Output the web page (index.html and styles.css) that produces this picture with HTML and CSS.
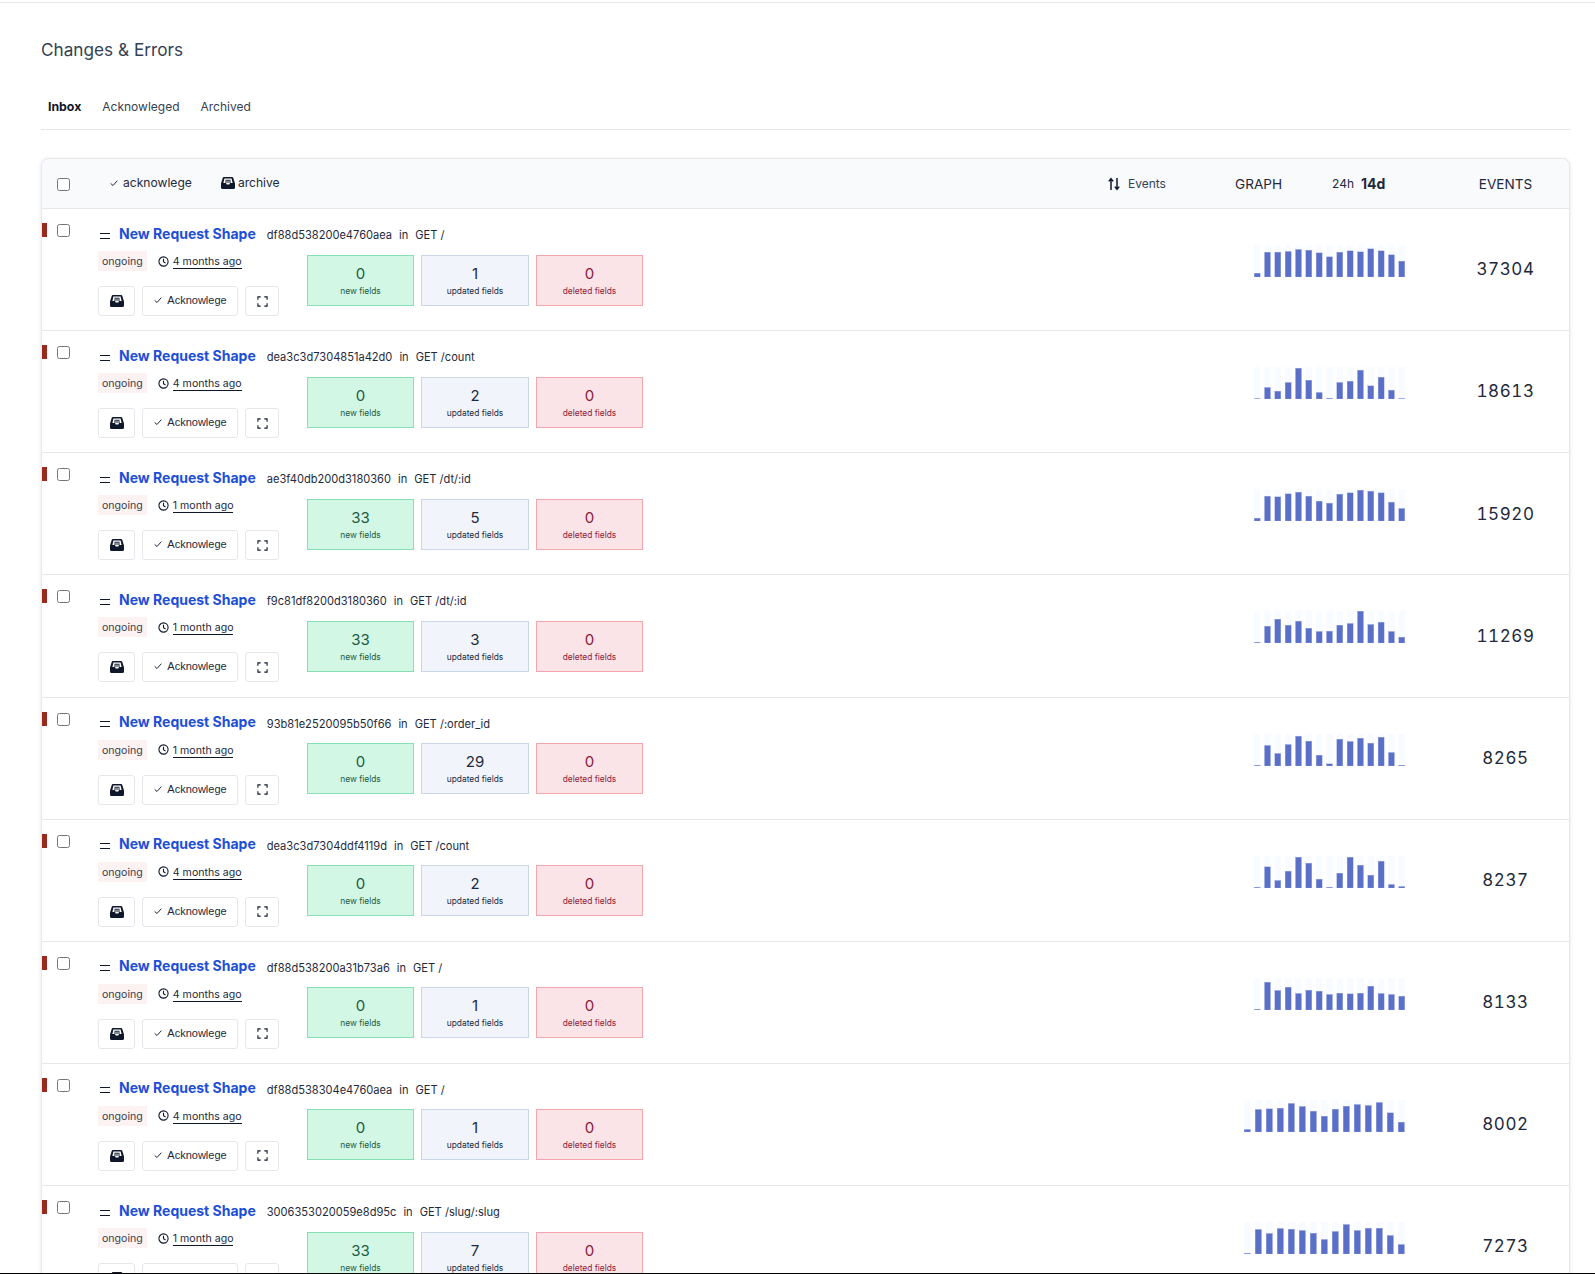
FILE: index.html
```html
<!DOCTYPE html>
<html lang="en">
<head>
  <meta charset="UTF-8" />
  <title>Changes &amp; Errors</title>
  <meta name="viewport" content="width=device-width, initial-scale=1.0" />
  <link rel="stylesheet" href="styles.css">
</head>
<body>

<div class="page">
  <div class="topline"></div>

  <main class="content">
    <h1 class="title">Changes &amp; Errors</h1>

    <nav class="tabs">
      <a href="#" class="tab active">Inbox</a>
      <a href="#" class="tab">Acknowleged</a>
      <a href="#" class="tab">Archived</a>
    </nav>

    <section class="card">
      <div class="card-head">
        <div class="col-check"><input type="checkbox"></div>
        <div class="head-actions">
          <span class="head-action">
            <svg class="icon-check" viewBox="0 0 12 12"><path d="M2 6.5 L4.8 9 L10 3.2" /></svg>
            acknowlege
          </span>
          <span class="head-action archive">
            <svg class="icon-inbox" viewBox="0 0 14 14"><use href="#inbox" /></svg>
            archive
          </span>
        </div>
        <div class="head-sort">
          <svg class="icon-sort" viewBox="0 0 12 14"><path d="M3 13 V2 M0.8 4.4 L3 1.6 L5.2 4.4 M9 1 V12 M6.8 9.6 L9 12.4 L11.2 9.6" /></svg>
          Events
        </div>
        <div class="head-graph">
          <span class="graph-label">GRAPH</span>
          <span class="range">24h</span>
          <span class="range range-on">14d</span>
        </div>
        <div class="col-events head-events">EVENTS</div>
      </div>

      <div id="rows"></div>
    </section>
  </main>
</div>

<svg class="defs" width="0" height="0">
  <symbol id="inbox" viewBox="0 0 14 14">
    <path fill="#0f172a" d="M3 1 H11 A1.4 1.4 0 0 1 12.3 2 L14 7.4 V11.5 A1.5 1.5 0 0 1 12.5 13 H1.5 A1.5 1.5 0 0 1 0 11.5 V7.4 L1.7 2 A1.4 1.4 0 0 1 3 1 Z" />
    <path fill="#fff" d="M3.4 2.6 H10.6 L11.6 7 H9 L8.3 8.6 H5.7 L5 7 H2.4 Z" />
    <path fill="#0f172a" d="M4.4 3.8 H9.6 V4.8 H4.4 Z M4 5.5 H10 V6.4 H4 Z" />
  </symbol>
</svg>

<script src="script.js"></script>
</body>
</html>
```

FILE: styles.css
```css
html, body {
  margin: 0;
  padding: 0;
  background: #fff;
}
body {
  font-family: Inter, 'Liberation Sans', sans-serif;
  color: #1e293b;
}
a {
  text-decoration: none;
  color: inherit;
}
.defs {
  position: absolute;
}
.page {
  height: 1274px;
  overflow: hidden;
  padding-top: 2px;
  box-sizing: border-box;
  border-bottom: 1px solid #000;
}
.topline {
  height: 1px;
  background: #e5e7eb;
}
.content {
  padding: 0 25px 0 41px;
}
.title {
  margin: 0;
  padding-top: 35px;
  font-size: 17.2px;
  line-height: 24px;
  font-weight: 400;
  color: #334155;
}
.tabs {
  display: flex;
  gap: 21px;
  margin-top: 36px;
  padding: 0 7px 13px;
  border-bottom: 1px solid #e5e7eb;
}
.tab {
  font-size: 12px;
  line-height: 18px;
  color: #374151;
}
.tab.active {
  font-size: 12.3px;
  font-weight: 700;
  color: #111827;
}
.card {
  margin-top: 28px;
  border: 1px solid #e5e7eb;
  border-left-color: #e4e9f7;
  border-bottom: none;
  border-radius: 8px 8px 0 0;
  box-shadow: 0 1px 4px rgba(30, 41, 90, 0.12);
}
.card-head {
  display: flex;
  align-items: center;
  height: 49px;
  background: #f9fafb;
  border-bottom: 1px solid #e5e7eb;
  border-radius: 8px 8px 0 0;
  font-size: 12.1px;
}
.col-check {
  width: 56px;
  padding-left: 15px;
  box-sizing: border-box;
  flex-shrink: 0;
}
.col-check input {
  display: block;
  margin: 0;
}
.card-head .col-check {
  padding-top: 2px;
}
.head-actions {
  flex: 1;
  display: flex;
  gap: 29px;
  padding-left: 11px;
  margin-top: -2px;
}
.head-action {
  display: flex;
  align-items: center;
  gap: 4px;
  color: #1e293b;
}
.head-action.archive {
  gap: 3px;
}
.icon-check {
  width: 10px;
  height: 10px;
  fill: none;
  stroke: #1e293b;
  stroke-width: 1.2;
}
.icon-inbox {
  width: 14px;
  height: 14px;
}
.head-sort {
  width: 127px;
  display: flex;
  align-items: center;
  gap: 8px;
  font-size: 12px;
  color: #334155;
}
.icon-sort {
  width: 12px;
  height: 14px;
  fill: none;
  stroke: #0f172a;
  stroke-width: 1.5;
}
.head-graph {
  width: 207px;
  display: flex;
  align-items: center;
}
.graph-label {
  font-size: 13.6px;
  width: 97px;
}
.range {
  font-size: 12px;
}
.range-on {
  font-size: 14px;
  font-weight: 700;
  margin-left: 7px;
}
.col-events {
  width: 127px;
  flex-shrink: 0;
  text-align: center;
}
.head-events {
  font-size: 13.6px;
}
.row {
  position: relative;
  display: flex;
  height: 122.125px;
  box-sizing: border-box;
  border-bottom: 1px solid #e5e7eb;
}
.marker {
  position: absolute;
  left: 0;
  top: 14px;
  width: 5px;
  height: 14px;
  background: #9a2a1e;
}
.row .col-check {
  padding-top: 15px;
}
.row-main {
  flex: 1;
  padding-top: 14px;
}
.row-title {
  display: flex;
  align-items: center;
  height: 24px;
  font-size: 11.1px;
  color: #1e293b;
}
.icon-eq {
  width: 10px;
  height: 4px;
  margin: 1px 9px 0 2px;
  border-top: 1.5px solid #0f172a;
  border-bottom: 1.5px solid #0f172a;
}
.shape-name {
  font-size: 14px;
  font-weight: 700;
  color: #1d4ed8;
  margin: 0 11px 4px 0;
}
.in {
  margin: 0 7px;
}
.row-body {
  display: flex;
  margin-top: 4px;
}
.row-meta {
  width: 209px;
  flex-shrink: 0;
}
.meta-top {
  display: flex;
  align-items: center;
  height: 20px;
  font-size: 10.6px;
}
.badge {
  background: #fdf2f2;
  padding: 0 4px;
  line-height: 22px;
  height: 20px;
  margin-right: 11px;
  color: #374151;
}
.age {
  display: flex;
  align-items: center;
  gap: 4px;
  padding-top: 2px;
}
.icon-clock {
  width: 11px;
  height: 11px;
  margin-top: -2px;
  fill: none;
  stroke: #0f172a;
  stroke-width: 1.2;
}
.age a {
  color: #1e293b;
  border-bottom: 1px solid #0f172a;
  line-height: 13px;
}
.buttons {
  display: flex;
  gap: 7px;
  margin-top: 15px;
}
.btn {
  display: flex;
  align-items: center;
  justify-content: center;
  gap: 4px;
  height: 30px;
  box-sizing: border-box;
  background: #fff;
  border: 1px solid #e5e7eb;
  border-radius: 3px;
  font-size: 11px;
  color: #1e293b;
}
.btn-archive {
  width: 37px;
}
.btn-ack {
  width: 96px;
  padding-bottom: 2.8px;
}
.btn-full {
  width: 34px;
}
.icon-full {
  width: 11px;
  height: 11px;
  fill: none;
  stroke: #0f172a;
  stroke-width: 1.2;
}
.metrics {
  display: flex;
  gap: 7px;
  margin-top: 3.6px;
}
.metric {
  width: 107px;
  height: 51px;
  box-sizing: border-box;
  border: 1px solid;
  text-align: center;
  padding-top: 9px;
}
.metric.updated {
  width: 108px;
}
.metric b {
  display: block;
  font-weight: 400;
  font-size: 15px;
  line-height: 18px;
}
.metric span {
  display: block;
  margin-top: 1px;
  font-size: 8.4px;
  line-height: 14px;
}
.metric.added {
  background: #d3f7e5;
  border-color: #86e0b4;
  color: #1c5a44;
}
.metric.updated {
  background: #f1f5fb;
  border-color: #cbd5e8;
  color: #1e293b;
}
.metric.deleted {
  background: #fbe4e7;
  border-color: #f5a5ae;
  color: #8b1a3b;
}
.graph {
  display: block;
  flex-shrink: 0;
  margin-top: 36px;
}
.track {
  fill: #f8fbff;
}
.bar {
  fill: #5a6fc8;
  stroke: #a3b0e6;
  stroke-width: 0.3;
}
.row .col-events {
  width: 164px;
  padding: 0 0 0.4px 37px;
  box-sizing: border-box;
  align-self: center;
  font-size: 17px;
  letter-spacing: 0.6px;
  font-variant-numeric: tabular-nums;
  color: #1e293b;
}
```

FILE: script.js
```js
const issues = [
  { hash: "df88d538200e4760aea", path: "GET /", age: "4 months ago", added: 0, updated: 1, events: 37304,
    bars: [4, 25, 25, 25.7, 27.7, 27, 24.3, 20.3, 25, 26.3, 25.3, 28.3, 26.3, 22.3, 16] },
  { hash: "dea3c3d7304851a42d0", path: "GET /count", age: "4 months ago", added: 0, updated: 2, events: 18613,
    bars: [0.7, 11.7, 8, 16.7, 31, 19, 6.7, 1, 16.7, 18, 29, 13.3, 22, 9, 0.7] },
  { hash: "ae3f40db200d3180360", path: "GET /dt/:id", age: "1 month ago", added: 33, updated: 5, events: 15920,
    bars: [3, 25, 24.3, 27.3, 29, 25, 20, 18, 27, 28.3, 31, 30, 28.3, 19, 12.7] },
  { hash: "f9c81df8200d3180360", path: "GET /dt/:id", age: "1 month ago", added: 33, updated: 3, events: 11269,
    bars: [1, 17, 24, 18, 22, 15, 11.7, 12, 18, 19.7, 32, 18.7, 21, 11.7, 6] },
  { hash: "93b81e2520095b50f66", path: "GET /:order_id", age: "1 month ago", added: 0, updated: 29, events: 8265,
    bars: [1, 20.7, 12.7, 21.7, 30, 25, 11, 2.3, 27, 24.7, 28, 23, 29, 13.7, 1] },
  { hash: "dea3c3d7304ddf4119d", path: "GET /count", age: "4 months ago", added: 0, updated: 2, events: 8237,
    bars: [1, 21.3, 7.7, 17, 31, 25, 9, 1, 15, 31, 23, 13, 27, 3.7, 1.7] },
  { hash: "df88d538200a31b73a6", path: "GET /", age: "4 months ago", added: 0, updated: 1, events: 8133,
    bars: [1, 28, 19.7, 23, 16.7, 20, 19, 15.7, 17, 16.3, 17, 24, 16.7, 15.7, 14] },
  { hash: "df88d538304e4760aea", path: "GET /", age: "4 months ago", added: 0, updated: 1, events: 8002, wide: true,
    bars: [2.7, 22.7, 23.3, 24, 28.7, 25.7, 21, 16, 23, 26, 27.7, 26.7, 29.7, 19.3, 10] },
  { hash: "3006353020059e8d95c", path: "GET /slug/:slug", age: "1 month ago", added: 33, updated: 7, events: 7273, wide: true,
    bars: [1, 24.7, 20.7, 25.7, 25, 23.7, 21, 14.7, 22.7, 29.7, 23.7, 26, 26, 18.7, 9.7] },
];

function renderGraph(issue) {
  const pitch = issue.wide ? 11 : 10.33;
  const barWidth = issue.wide ? 6.67 : 6.33;
  const width = pitch * 14 + barWidth;
  const rects = issue.bars.map((h, i) => {
    const x = i * pitch;
    return `<rect class="track" x="${x}" y="0" width="${barWidth}" height="32" />` +
      `<rect class="bar" x="${x + 0.15}" y="${32 - h + 0.15}" width="${barWidth - 0.3}" height="${Math.max(h - 0.15, 0.3)}" />`;
  }).join('');
  return `<svg class="graph" width="${width}" height="32" viewBox="0 0 ${width} 32">${rects}</svg>`;
}

function renderIssue(issue) {
  return `
    <div class="row">
      <div class="marker"></div>
      <div class="col-check"><input type="checkbox"></div>
      <div class="row-main">
        <div class="row-title">
          <span class="icon-eq"></span>
          <a href="#" class="shape-name">New Request Shape</a>
          <span>${issue.hash}</span>
          <span class="in">in</span>
          <span>${issue.path}</span>
        </div>
        <div class="row-body">
          <div class="row-meta">
            <div class="meta-top">
              <span class="badge">ongoing</span>
              <span class="age">
                <svg class="icon-clock" viewBox="0 0 12 12"><circle cx="6" cy="6" r="5" /><path d="M6 3 V6.3 L8.2 7.6" /></svg>
                <a href="#">${issue.age}</a>
              </span>
            </div>
            <div class="buttons">
              <button class="btn btn-archive"><svg class="icon-inbox" viewBox="0 0 14 14"><use href="#inbox" /></svg></button>
              <button class="btn btn-ack">
                <svg class="icon-check" viewBox="0 0 12 12"><path d="M2 6.5 L4.8 9 L10 3.2" /></svg>
                Acknowlege
              </button>
              <button class="btn btn-full">
                <svg class="icon-full" viewBox="0 0 12 12"><path d="M1 4 V1 H4 M8 1 H11 V4 M11 8 V11 H8 M4 11 H1 V8" /></svg>
              </button>
            </div>
          </div>
          <div class="metrics">
            <div class="metric added"><b>${issue.added}</b><span>new fields</span></div>
            <div class="metric updated"><b>${issue.updated}</b><span>updated fields</span></div>
            <div class="metric deleted"><b>0</b><span>deleted fields</span></div>
          </div>
        </div>
      </div>
      ${renderGraph(issue)}
      <div class="col-events">${issue.events}</div>
    </div>`;
}

document.getElementById("rows").innerHTML = issues.map(renderIssue).join('');
```
